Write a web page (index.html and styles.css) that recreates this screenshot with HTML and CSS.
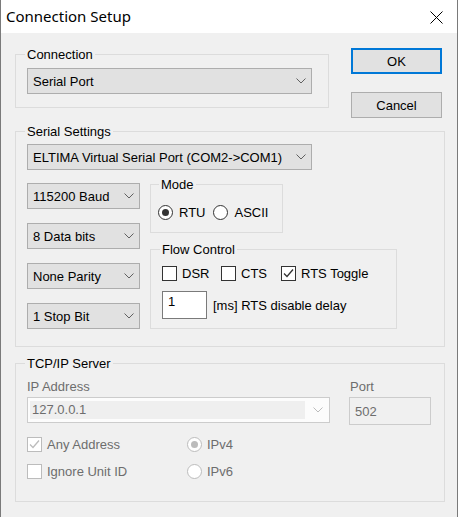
FILE: index.html
```html
<!DOCTYPE html>
<html>
<head>
<meta charset="utf-8">
<link rel="stylesheet" href="styles.css">
</head>
<body>
<div class="window">
  <div class="titlebar">
    <span class="title">Connection Setup</span>
    <svg class="close" width="13" height="13" viewBox="0 0 13 13"><path d="M0.5 0.5 L12.5 12.5 M12.5 0.5 L0.5 12.5" stroke="#000" stroke-width="1" fill="none"/></svg>
  </div>
  <div class="content">
    <div class="toprow">
      <fieldset class="group g-conn">
        <legend>Connection</legend>
        <div class="combo w-wide"><span>Serial Port</span><svg class="chev" width="10" height="6" viewBox="0 0 10 6"><path d="M0.5 0.5 L5 5 L9.5 0.5" fill="none" stroke="#606060"/></svg></div>
      </fieldset>
      <div class="buttons">
        <div class="btn default">OK</div>
        <div class="btn cancel">Cancel</div>
      </div>
    </div>

    <fieldset class="group g-serial">
      <legend>Serial Settings</legend>
      <div class="combo w-wide"><span>ELTIMA Virtual Serial Port (COM2-&gt;COM1)</span><svg class="chev" width="10" height="6" viewBox="0 0 10 6"><path d="M0.5 0.5 L5 5 L9.5 0.5" fill="none" stroke="#606060"/></svg></div>
      <div class="serial-row">
        <div class="serial-left">
          <div class="combo w-small"><span>115200 Baud</span><svg class="chev" width="10" height="6" viewBox="0 0 10 6"><path d="M0.5 0.5 L5 5 L9.5 0.5" fill="none" stroke="#606060"/></svg></div>
          <div class="combo w-small"><span>8 Data bits</span><svg class="chev" width="10" height="6" viewBox="0 0 10 6"><path d="M0.5 0.5 L5 5 L9.5 0.5" fill="none" stroke="#606060"/></svg></div>
          <div class="combo w-small"><span>None Parity</span><svg class="chev" width="10" height="6" viewBox="0 0 10 6"><path d="M0.5 0.5 L5 5 L9.5 0.5" fill="none" stroke="#606060"/></svg></div>
          <div class="combo w-small"><span>1 Stop Bit</span><svg class="chev" width="10" height="6" viewBox="0 0 10 6"><path d="M0.5 0.5 L5 5 L9.5 0.5" fill="none" stroke="#606060"/></svg></div>
        </div>
        <div class="serial-right">
          <fieldset class="group g-mode">
            <legend>Mode</legend>
            <div class="opt-row">
              <span class="opt rtu"><span class="radio on"></span><span>RTU</span></span>
              <span class="opt"><span class="radio"></span><span>ASCII</span></span>
            </div>
          </fieldset>
          <fieldset class="group g-flow">
            <legend>Flow Control</legend>
            <div class="opt-row">
              <span class="opt dsr"><span class="check"></span><span>DSR</span></span>
              <span class="opt cts"><span class="check"></span><span>CTS</span></span>
              <span class="opt"><span class="check"><svg width="13" height="13" viewBox="0 0 13 13"><path d="M2 6.5 L5 9.5 L11 2.5" fill="none" stroke="#333" stroke-width="1.3"/></svg></span><span>RTS Toggle</span></span>
            </div>
            <div class="delay-row">
              <div class="edit">1</div>
              <span class="delay-text">[ms] RTS disable delay</span>
            </div>
          </fieldset>
        </div>
      </div>
    </fieldset>

    <fieldset class="group g-tcp">
      <legend>TCP/IP Server</legend>
      <div class="tcp-row">
        <div class="ip-col">
          <div class="dis-label">IP Address</div>
          <div class="combo-dis"><span class="combo-dis-edit">127.0.0.1</span><svg class="chev" width="10" height="6" viewBox="0 0 10 6"><path d="M0.5 0.5 L5 5 L9.5 0.5" fill="none" stroke="#bcbcbc"/></svg></div>
        </div>
        <div class="port-col">
          <div class="dis-label port-label">Port</div>
          <div class="edit-dis">502</div>
        </div>
      </div>
      <div class="tcp-opt">
        <span class="opt dis wide"><span class="check dis-box"><svg width="13" height="13" viewBox="0 0 13 13"><path d="M2 6.5 L5 9.5 L11 2.5" fill="none" stroke="#bcbcbc" stroke-width="1.3"/></svg></span><span>Any Address</span></span>
        <span class="opt dis"><span class="radio dis-box on-dis"></span><span>IPv4</span></span>
      </div>
      <div class="tcp-opt">
        <span class="opt dis wide"><span class="check dis-box"></span><span>Ignore Unit ID</span></span>
        <span class="opt dis"><span class="radio dis-box"></span><span>IPv6</span></span>
      </div>
    </fieldset>
  </div>
</div>
</body>
</html>
```

FILE: styles.css
```css
* { box-sizing: border-box; }
html, body { margin: 0; padding: 0; }
body {
  width: 458px;
  height: 517px;
  overflow: hidden;
  background: #f0f0f0;
  font-family: "Liberation Sans", Arial, sans-serif;
  font-size: 13px;
  color: #000;
}
.window {
  width: 458px;
  height: 517px;
  background: #f0f0f0;
  border-left: 1px solid #7a7a7a;
  border-right: 1px solid #7a7a7a;
}
.titlebar {
  height: 33px;
  background: #fff;
  display: flex;
  justify-content: space-between;
  align-items: flex-start;
}
.title {
  font-family: "Noto Sans", "Liberation Sans", sans-serif;
  font-size: 15px;
  line-height: 33px;
  padding-left: 5px;
}
.close { margin: 11px 14px 0 0; }

.content { padding: 14px 0 0 14px; }

fieldset {
  margin: 0;
  border: 1px solid #dcdcdc;
  min-width: 0;
}
legend {
  padding: 0 2px;
  margin-left: -2px;
  line-height: 15px;
  font-size: 13px;
}

.toprow { display: flex; align-items: flex-start; }
.g-conn { width: 314px; padding: 6px 11px 13px 11px; }
.buttons { margin-left: 22px; margin-top: 1px; display: flex; flex-direction: column; }
.btn {
  width: 91px;
  height: 26px;
  background: #e1e1e1;
  border: 1px solid #adadad;
  display: flex;
  align-items: center;
  justify-content: center;
}
.btn.default { border: 2px solid #0078d7; }
.btn.cancel { margin-top: 18px; }

.combo {
  height: 26px;
  background: #e1e1e1;
  border: 1px solid #adadad;
  display: flex;
  align-items: center;
  justify-content: space-between;
  padding: 0 5px 0 5px;
  white-space: nowrap;
}
.w-wide { width: 285px; }
.w-small { width: 113px; }

.g-serial { width: 430px; margin-top: 6px; padding: 5px 11px 17px 11px; }
.serial-row { display: flex; align-items: flex-start; }
.serial-left { margin-top: 13px; display: flex; flex-direction: column; gap: 14px; }
.serial-right { margin-top: 7px; margin-left: 10px; display: flex; flex-direction: column; }

.g-mode { width: 133px; padding: 13px 7px 12px 7px; }
.g-mode > legend { margin-left: 1px; }
.g-flow { width: 247px; margin-top: 9px; padding: 9px 11px 9px 11px; }

.opt-row { display: flex; align-items: center; height: 15px; }
.opt { display: inline-flex; align-items: center; gap: 6px; line-height: 15px; }
.rtu { margin-right: 8px; }
.g-flow .opt { gap: 5px; }
.dsr { width: 59px; }
.cts { width: 60px; }

.radio {
  width: 15px;
  height: 15px;
  border-radius: 50%;
  border: 1px solid #333;
  background: #fff;
  display: inline-flex;
  align-items: center;
  justify-content: center;
  flex: none;
}
.radio.on::after {
  content: "";
  width: 7px;
  height: 7px;
  border-radius: 50%;
  background: #333;
}
.check {
  width: 15px;
  height: 15px;
  border: 1px solid #333;
  background: #fff;
  display: inline-flex;
  align-items: center;
  justify-content: center;
  flex: none;
}

.delay-row { display: flex; align-items: center; margin-top: 10px; }
.edit {
  width: 45px;
  height: 28px;
  background: #fff;
  border: 1px solid #7a7a7a;
  padding: 2px 0 0 5px;
  line-height: 15px;
}
.delay-text { margin-left: 6px; }

.g-tcp { width: 430px; margin-top: 9px; padding: 8px 11px 22px 11px; }
.tcp-row { display: flex; align-items: flex-start; }
.dis-label { color: #6d6d6d; line-height: 15px; height: 15px; }
.port-label { margin-left: 1px; }
.ip-col { width: 303px; display: flex; flex-direction: column; gap: 3px; }
.port-col { margin-left: 19px; display: flex; flex-direction: column; gap: 3px; }
.combo-dis {
  width: 303px;
  height: 26px;
  border: 1px solid #cccccc;
  background: #fcfcfc;
  display: flex;
  align-items: center;
  justify-content: space-between;
  padding: 3px 6px 3px 2px;
}
.combo-dis-edit {
  width: 275px;
  height: 18px;
  background: #efefef;
  color: #6d6d6d;
  line-height: 18px;
  padding-left: 2px;
}
.edit-dis {
  width: 82px;
  height: 28px;
  border: 1px solid #cccccc;
  background: #f0f0f0;
  color: #6d6d6d;
  display: flex;
  align-items: center;
  padding-left: 5px;
}
.tcp-opt { display: flex; align-items: center; height: 15px; margin-top: 12px; }
.opt.dis { color: #6d6d6d; gap: 5px; }
.opt.wide { width: 160px; }
.dis-box { border-color: #bcbcbc; }
.radio.on-dis::after {
  content: "";
  width: 7px;
  height: 7px;
  border-radius: 50%;
  background: #bcbcbc;
}
```
